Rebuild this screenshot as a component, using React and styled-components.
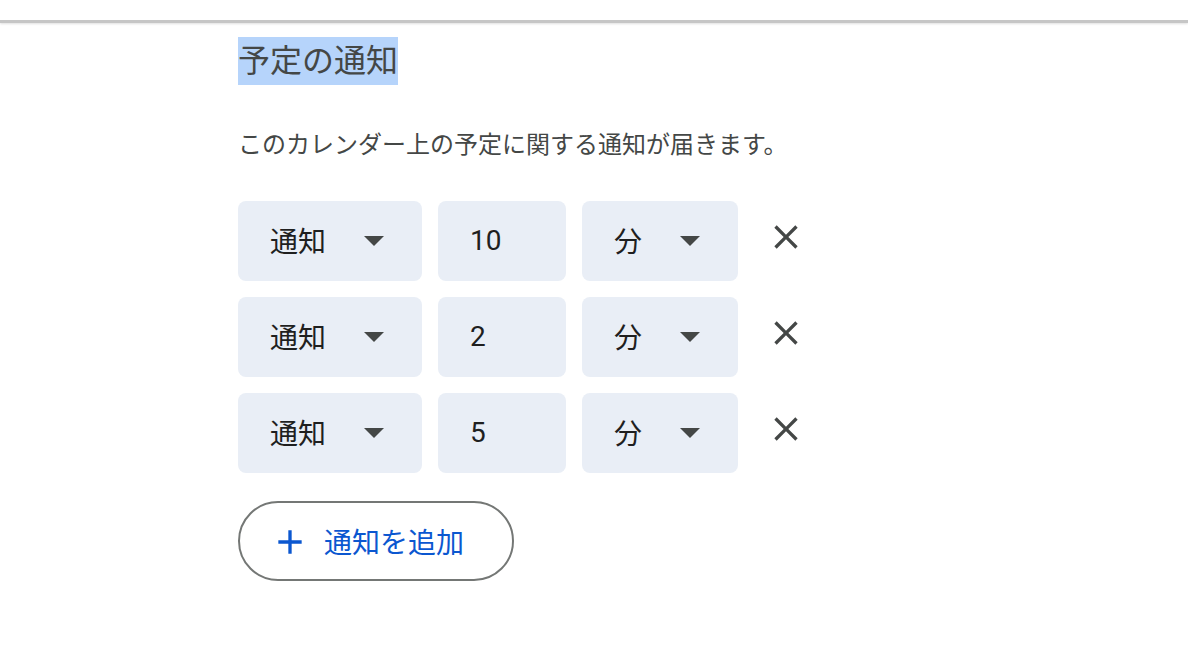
import React from 'react';
import styled, { createGlobalStyle } from 'styled-components';

const GlobalStyle = createGlobalStyle`
  body {
    margin: 0;
    background: #ffffff;
    font-family: Roboto, "Noto Sans CJK JP", sans-serif;
  }
`;

const TopBar = styled.div`
  height: 20px;
  border-bottom: 3px solid #c6c6c6;
  box-shadow: 0 1px 2px rgba(0, 0, 0, 0.12);
`;

const Section = styled.section`
  display: flex;
  flex-direction: column;
  align-items: flex-start;
  padding: 14px 0 0 238px;
`;

const Title = styled.h2`
  margin: 0;
  font-size: 32px;
  line-height: 48px;
  font-weight: 400;
  color: #444746;
`;

const Highlight = styled.span`
  display: inline-block;
  height: 48px;
  background: #b6d4fb;
`;

const Description = styled.p`
  margin: 43px 0 0;
  font-size: 24px;
  line-height: 34px;
  color: #444746;
`;

const List = styled.div`
  display: flex;
  flex-direction: column;
  gap: 16px;
  margin-top: 39px;
`;

const Row = styled.div`
  display: flex;
  align-items: center;
  gap: 16px;
`;

const Field = styled.div`
  box-sizing: border-box;
  display: flex;
  align-items: center;
  justify-content: space-between;
  width: ${(p) => p.$width}px;
  height: 80px;
  padding: 0 38px 2px 32px;
  border-radius: 8px;
  background: #e9eef6;
  font-size: 28px;
  color: #1f1f1f;
`;

const Caret = styled.svg`
  width: 20px;
  height: 10px;
  margin-top: 2px;
  fill: #444746;
`;

const CloseButton = styled.button`
  display: flex;
  align-items: center;
  justify-content: center;
  width: 48px;
  height: 48px;
  margin: 0 0 8px 8px;
  padding: 0;
  border: none;
  background: none;
  cursor: pointer;
  svg {
    width: 40px;
    height: 40px;
    fill: #444746;
  }
`;

const AddButton = styled.button`
  display: flex;
  align-items: center;
  gap: 14px;
  height: 80px;
  margin-top: 28px;
  padding: 0 48px 0 30px;
  border: 2px solid #747775;
  border-radius: 40px;
  background: #ffffff;
  font-family: Roboto, "Noto Sans CJK JP", sans-serif;
  font-size: 28px;
  color: #0b57d0;
  cursor: pointer;
  svg {
    width: 40px;
    height: 40px;
    fill: #0b57d0;
    margin-top: 2px;
  }
`;

const DropCaret = () => (
  <Caret viewBox="0 0 20 10">
    <path d="M0 0h20L10 10z" />
  </Caret>
);

const reminders = ['10', '2', '5'];

export default function App() {
  return (
    <>
      <GlobalStyle />
      <TopBar />
      <Section>
        <Title>
          <Highlight>予定の通知</Highlight>
        </Title>
        <Description>このカレンダー上の予定に関する通知が届きます。</Description>
        <List>
          {reminders.map((value, i) => (
            <Row key={i}>
              <Field $width={184}>
                <span>通知</span>
                <DropCaret />
              </Field>
              <Field $width={128}>
                <span>{value}</span>
              </Field>
              <Field $width={156}>
                <span>分</span>
                <DropCaret />
              </Field>
              <CloseButton aria-label="削除">
                <svg viewBox="0 0 24 24">
                  <path d="M19 6.41 17.59 5 12 10.59 6.41 5 5 6.41 10.59 12 5 17.59 6.41 19 12 13.41 17.59 19 19 17.59 13.41 12z" />
                </svg>
              </CloseButton>
            </Row>
          ))}
        </List>
        <AddButton>
          <svg viewBox="0 0 24 24">
            <path d="M19 13h-6v6h-2v-6H5v-2h6V5h2v6h6v2z" />
          </svg>
          <span>通知を追加</span>
        </AddButton>
      </Section>
    </>
  );
}
